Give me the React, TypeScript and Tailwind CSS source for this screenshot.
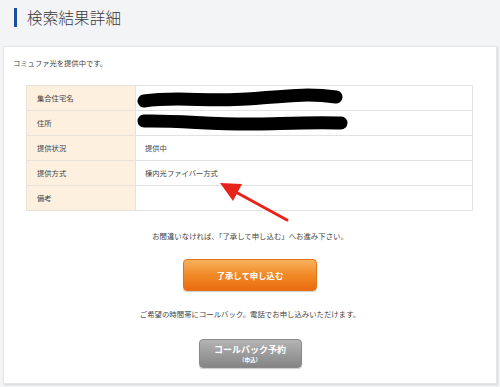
import React from "react";

const rows = [
  { label: "集合住宅名", value: "scribble1" },
  { label: "住所", value: "scribble2" },
  { label: "提供状況", value: "提供中" },
  { label: "提供方式", value: "棟内光ファイバー方式" },
  { label: "備考", value: "" },
];

const Scribble = ({ w, variant }: { w: number; variant: number }) => (
  <svg width={w} height="22" viewBox={`0 0 ${w} 22`} className="block">
    {variant === 1 ? (
      <path
        d={`M7 14 C 40 9, 70 15, 110 12 S 170 6, ${w - 8} 10`}
        stroke="#000"
        strokeWidth="13"
        strokeLinecap="round"
        fill="none"
      />
    ) : (
      <path
        d={`M7 9 C 40 8, 80 13, 120 12 S 180 10, ${w - 8} 11`}
        stroke="#000"
        strokeWidth="13"
        strokeLinecap="round"
        fill="none"
      />
    )}
  </svg>
);

const App = () => {
  return (
    <div
      className="relative w-[500px] h-[387px] bg-[#f3f4f6] overflow-hidden text-[#333]"
      style={{ fontFamily: '"Noto Sans CJK JP", "Noto Sans", sans-serif' }}
    >
      <div className="h-[46px] flex items-start pt-[8px] pl-[14px] gap-[10px]">
        <div className="w-[3px] h-[19px] bg-[#1d4fa0]" />
        <h1 className="text-[15.5px] leading-[19px] font-light text-[#3a3a3a] tracking-[0.2px]">
          検索結果詳細
        </h1>
      </div>

      <div className="mx-[3px] h-[338px] bg-white border border-[#e6e6e6] shadow-[1px_1px_2px_rgba(0,0,0,0.12)] flex flex-col">
        <p className="pl-[9px] pt-[11px] text-[7.3px] leading-[10px] text-[#444]">
          コミュファ光を提供中です。
        </p>

        <table className="ml-[22px] mr-[23px] mt-[17px] border-collapse border border-[#e2e2e2] text-[7.3px] text-[#444]">
          <tbody>
            {rows.map((r) => (
              <tr key={r.label} className="h-[25px]">
                <td className="w-[109px] bg-[#fdf0df] border border-[#e8e2da] pl-[10px] align-middle">
                  {r.label}
                </td>
                <td className="border border-[#e2e2e2] pl-[9px] align-middle">
                  {r.value === "scribble1" ? (
                    <div className="-ml-[8px]">
                      <Scribble w={207} variant={1} />
                    </div>
                  ) : r.value === "scribble2" ? (
                    <div className="-ml-[8px]">
                      <Scribble w={212} variant={2} />
                    </div>
                  ) : (
                    r.value
                  )}
                </td>
              </tr>
            ))}
          </tbody>
        </table>

        <p className="mt-[20px] text-center text-[7.4px] leading-[10px] text-[#444]">
          お間違いなければ、「了承して申し込む」へお進み下さい。
        </p>

        <div className="flex justify-center mt-[18px]">
          <button className="w-[134px] h-[32px] rounded-[4px] bg-gradient-to-b from-[#f9b15a] via-[#f08a26] to-[#ec6a10] border border-[#e0741c] shadow-[0_1px_1px_rgba(0,0,0,0.2)] text-white text-[8.4px] font-bold">
            了承して申し込む
          </button>
        </div>

        <p className="mt-[18px] text-center text-[7.4px] leading-[10px] text-[#444]">
          ご希望の時間帯にコールバック。電話でお申し込みいただけます。
        </p>

        <div className="flex justify-center mt-[20px]">
          <button className="w-[103px] h-[29px] rounded-[4px] bg-gradient-to-b from-[#b4b4b4] to-[#858585] border border-[#8a8a8a] shadow-[0_1px_1px_rgba(0,0,0,0.2)] text-white flex flex-col items-center justify-center gap-[1px]">
            <span className="block text-[9px] leading-[12px] font-bold">コールバック予約</span>
            <span className="block text-[5.5px] leading-[7px] font-bold">（申込）</span>
          </button>
        </div>
      </div>

      <svg
        className="absolute left-0 top-0 pointer-events-none"
        width="500"
        height="387"
        viewBox="0 0 500 387"
      >
        <line x1="287" y1="220" x2="232" y2="190" stroke="#e8231a" strokeWidth="3" strokeLinecap="round" />
        <polygon points="220,183 242,184 233,201" fill="#e8231a" />
      </svg>
    </div>
  );
};

export default App;
